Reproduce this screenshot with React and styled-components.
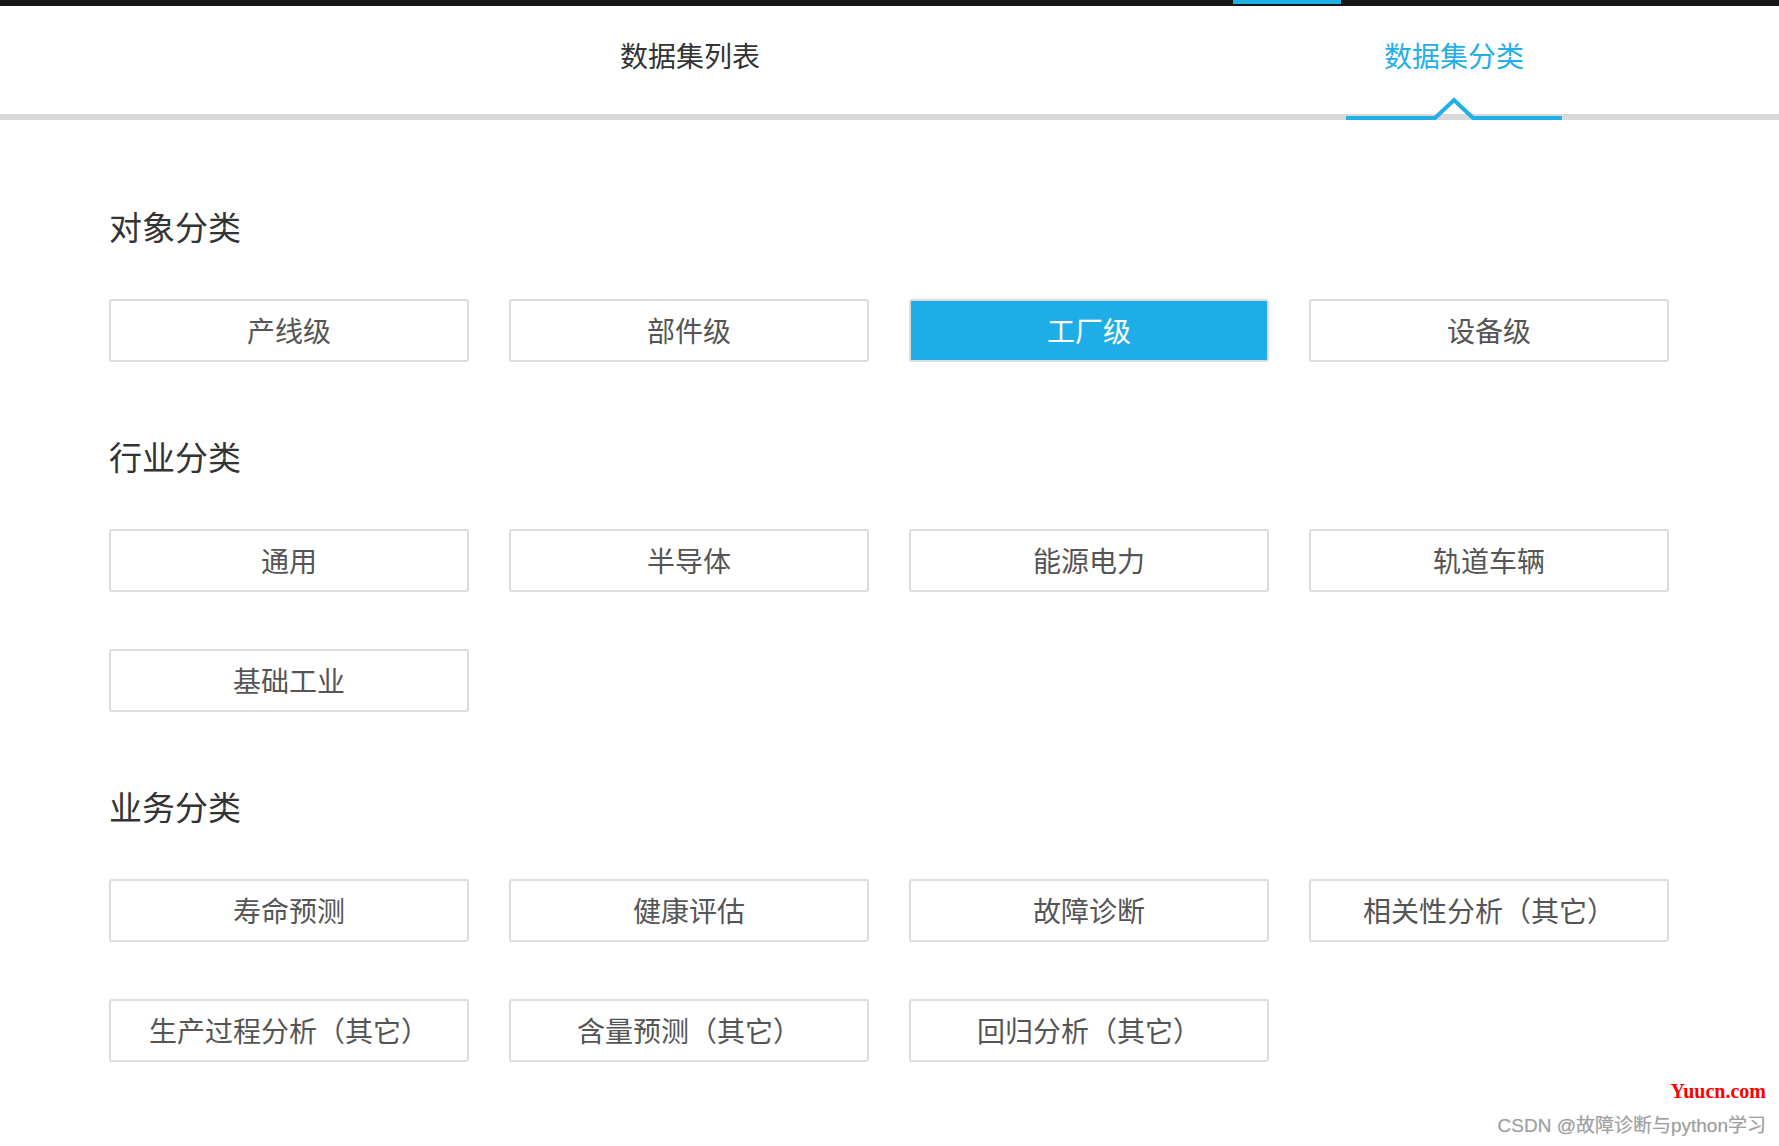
import React from "react"
import styled, { createGlobalStyle } from "styled-components"

const Global = createGlobalStyle`
  html, body {
    margin: 0;
    padding: 0;
    background: #fff;
    overflow: hidden;
  }
  body {
    font-family: "Noto Sans CJK SC", "Noto Sans", sans-serif;
    color: #333;
  }
`

const Page = styled.div`
  width: 1779px;
  height: 1146px;
  position: relative;
  overflow: hidden;
`

const TopStrip = styled.div`
  height: 6px;
  background: #161616;
  display: flex;
  padding-left: 1233px;
`

const StripMark = styled.div`
  width: 108px;
  height: 4px;
  background: #1fb0e6;
`

const TabBar = styled.div`
  height: 108px;
  border-bottom: 6px solid #d9d9d9;
  display: grid;
  grid-template-columns: 764px 764px;
  padding-left: 308px;
`

const Tab = styled.div`
  position: relative;
  display: flex;
  align-items: center;
  justify-content: center;
  padding-bottom: 10px;
  font-size: 28px;
  line-height: 40px;
  color: ${p => (p.$active ? "#22aee8" : "#333")};
  cursor: pointer;
`

const Indicator = styled.svg`
  position: absolute;
  left: 50%;
  bottom: -6px;
  transform: translateX(-50%);
  display: block;
`

const Content = styled.div`
  padding: 82px 0 0 109px;
  display: flex;
  flex-direction: column;
  gap: 70px;
`

const Section = styled.section`
  display: flex;
  flex-direction: column;
`

const Heading = styled.h2`
  margin: 0 0 49px;
  font-size: 33px;
  line-height: 48px;
  font-weight: normal;
  color: #333;
`

const Grid = styled.div`
  display: grid;
  grid-template-columns: repeat(4, 360px);
  column-gap: 40px;
  row-gap: 57px;
`

const Chip = styled.button`
  box-sizing: border-box;
  width: 360px;
  height: 63px;
  margin: 0;
  padding: 0;
  border: 2px solid #dcdcdc;
  border-radius: 3px;
  background: ${p => (p.$active ? "#1fade8" : "#fff")};
  color: ${p => (p.$active ? "#fff" : "#555")};
  font-family: "Noto Sans CJK SC", "Noto Sans", sans-serif;
  font-size: 28px;
  line-height: 59px;
  text-align: center;
  cursor: pointer;
`

const Watermark = styled.div`
  position: absolute;
  top: 1079px;
  right: 13px;
  display: flex;
  flex-direction: column;
  align-items: flex-end;
  gap: 11px;
`

const SiteMark = styled.div`
  font-family: "Liberation Serif", serif;
  font-weight: bold;
  font-size: 20px;
  line-height: 24px;
  color: #ff0000;
`

const AuthorMark = styled.div`
  font-family: "Liberation Sans", "Noto Sans CJK SC", sans-serif;
  font-size: 19px;
  line-height: 24px;
  color: #a0a0a0;
  text-shadow: 0 0 1px #cfcfcf;
`

const sections = [
  { title: "对象分类", items: ["产线级", "部件级", "工厂级", "设备级"], active: "工厂级" },
  { title: "行业分类", items: ["通用", "半导体", "能源电力", "轨道车辆", "基础工业"] },
  {
    title: "业务分类",
    items: [
      "寿命预测",
      "健康评估",
      "故障诊断",
      "相关性分析（其它）",
      "生产过程分析（其它）",
      "含量预测（其它）",
      "回归分析（其它）",
    ],
  },
]

export default function App() {
  return (
    <Page>
      <Global />
      <TopStrip>
        <StripMark />
      </TopStrip>
      <TabBar>
        <Tab>数据集列表</Tab>
        <Tab $active>
          数据集分类
          <Indicator width="216" height="26" viewBox="0 0 216 26">
            <polyline
              points="0,24 89,24 108,6 127,24 216,24"
              fill="none"
              stroke="#22aee8"
              strokeWidth="4"
              strokeLinejoin="miter"
            />
          </Indicator>
        </Tab>
      </TabBar>
      <Content>
        {sections.map(s => (
          <Section key={s.title}>
            <Heading>{s.title}</Heading>
            <Grid>
              {s.items.map(it => (
                <Chip key={it} $active={it === s.active}>
                  {it}
                </Chip>
              ))}
            </Grid>
          </Section>
        ))}
      </Content>
      <Watermark>
        <SiteMark>Yuucn.com</SiteMark>
        <AuthorMark>CSDN @故障诊断与python学习</AuthorMark>
      </Watermark>
    </Page>
  )
}
